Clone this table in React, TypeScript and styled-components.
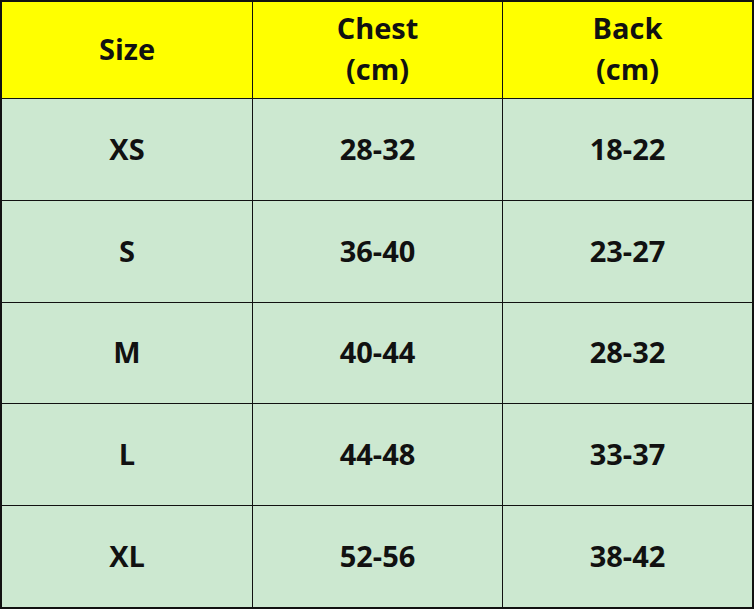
import React from "react";
import styled, { createGlobalStyle } from "styled-components";

const GlobalStyle = createGlobalStyle`
  html, body {
    margin: 0;
    padding: 0;
    background: #ffffff;
  }
`;

const Chart = styled.div`
  box-sizing: border-box;
  width: 754px;
  height: 609px;
  display: grid;
  grid-template-columns: 250px 249px 1fr;
  grid-template-rows: 96px repeat(5, 1fr);
  gap: 1px;
  background: #111;
  border: 2px solid #111;
  font-family: "Open Sans", "Noto Sans", sans-serif;
  font-weight: 700;
  color: #111;
`;

const Cell = styled.div<{ $head?: boolean }>`
  display: flex;
  flex-direction: column;
  align-items: center;
  justify-content: center;
  text-align: center;
  background: ${(p) => (p.$head ? "#ffff00" : "#cce8d0")};
  font-size: 29px;
  line-height: 41px;
  padding-bottom: ${(p) => (p.$head ? "4px" : "2px")};
`;

const headers = [["Size"], ["Chest", "(cm)"], ["Back", "(cm)"]];

const rows = [
  ["XS", "28-32", "18-22"],
  ["S", "36-40", "23-27"],
  ["M", "40-44", "28-32"],
  ["L", "44-48", "33-37"],
  ["XL", "52-56", "38-42"],
];

export default function App() {
  return (
    <>
      <GlobalStyle />
      <Chart>
        {headers.map((lines) => (
          <Cell $head key={lines[0]}>
            {lines.map((line) => (
              <span key={line}>{line}</span>
            ))}
          </Cell>
        ))}
        {rows.map((row) =>
          row.map((value, i) => <Cell key={row[0] + i}>{value}</Cell>)
        )}
      </Chart>
    </>
  );
}
